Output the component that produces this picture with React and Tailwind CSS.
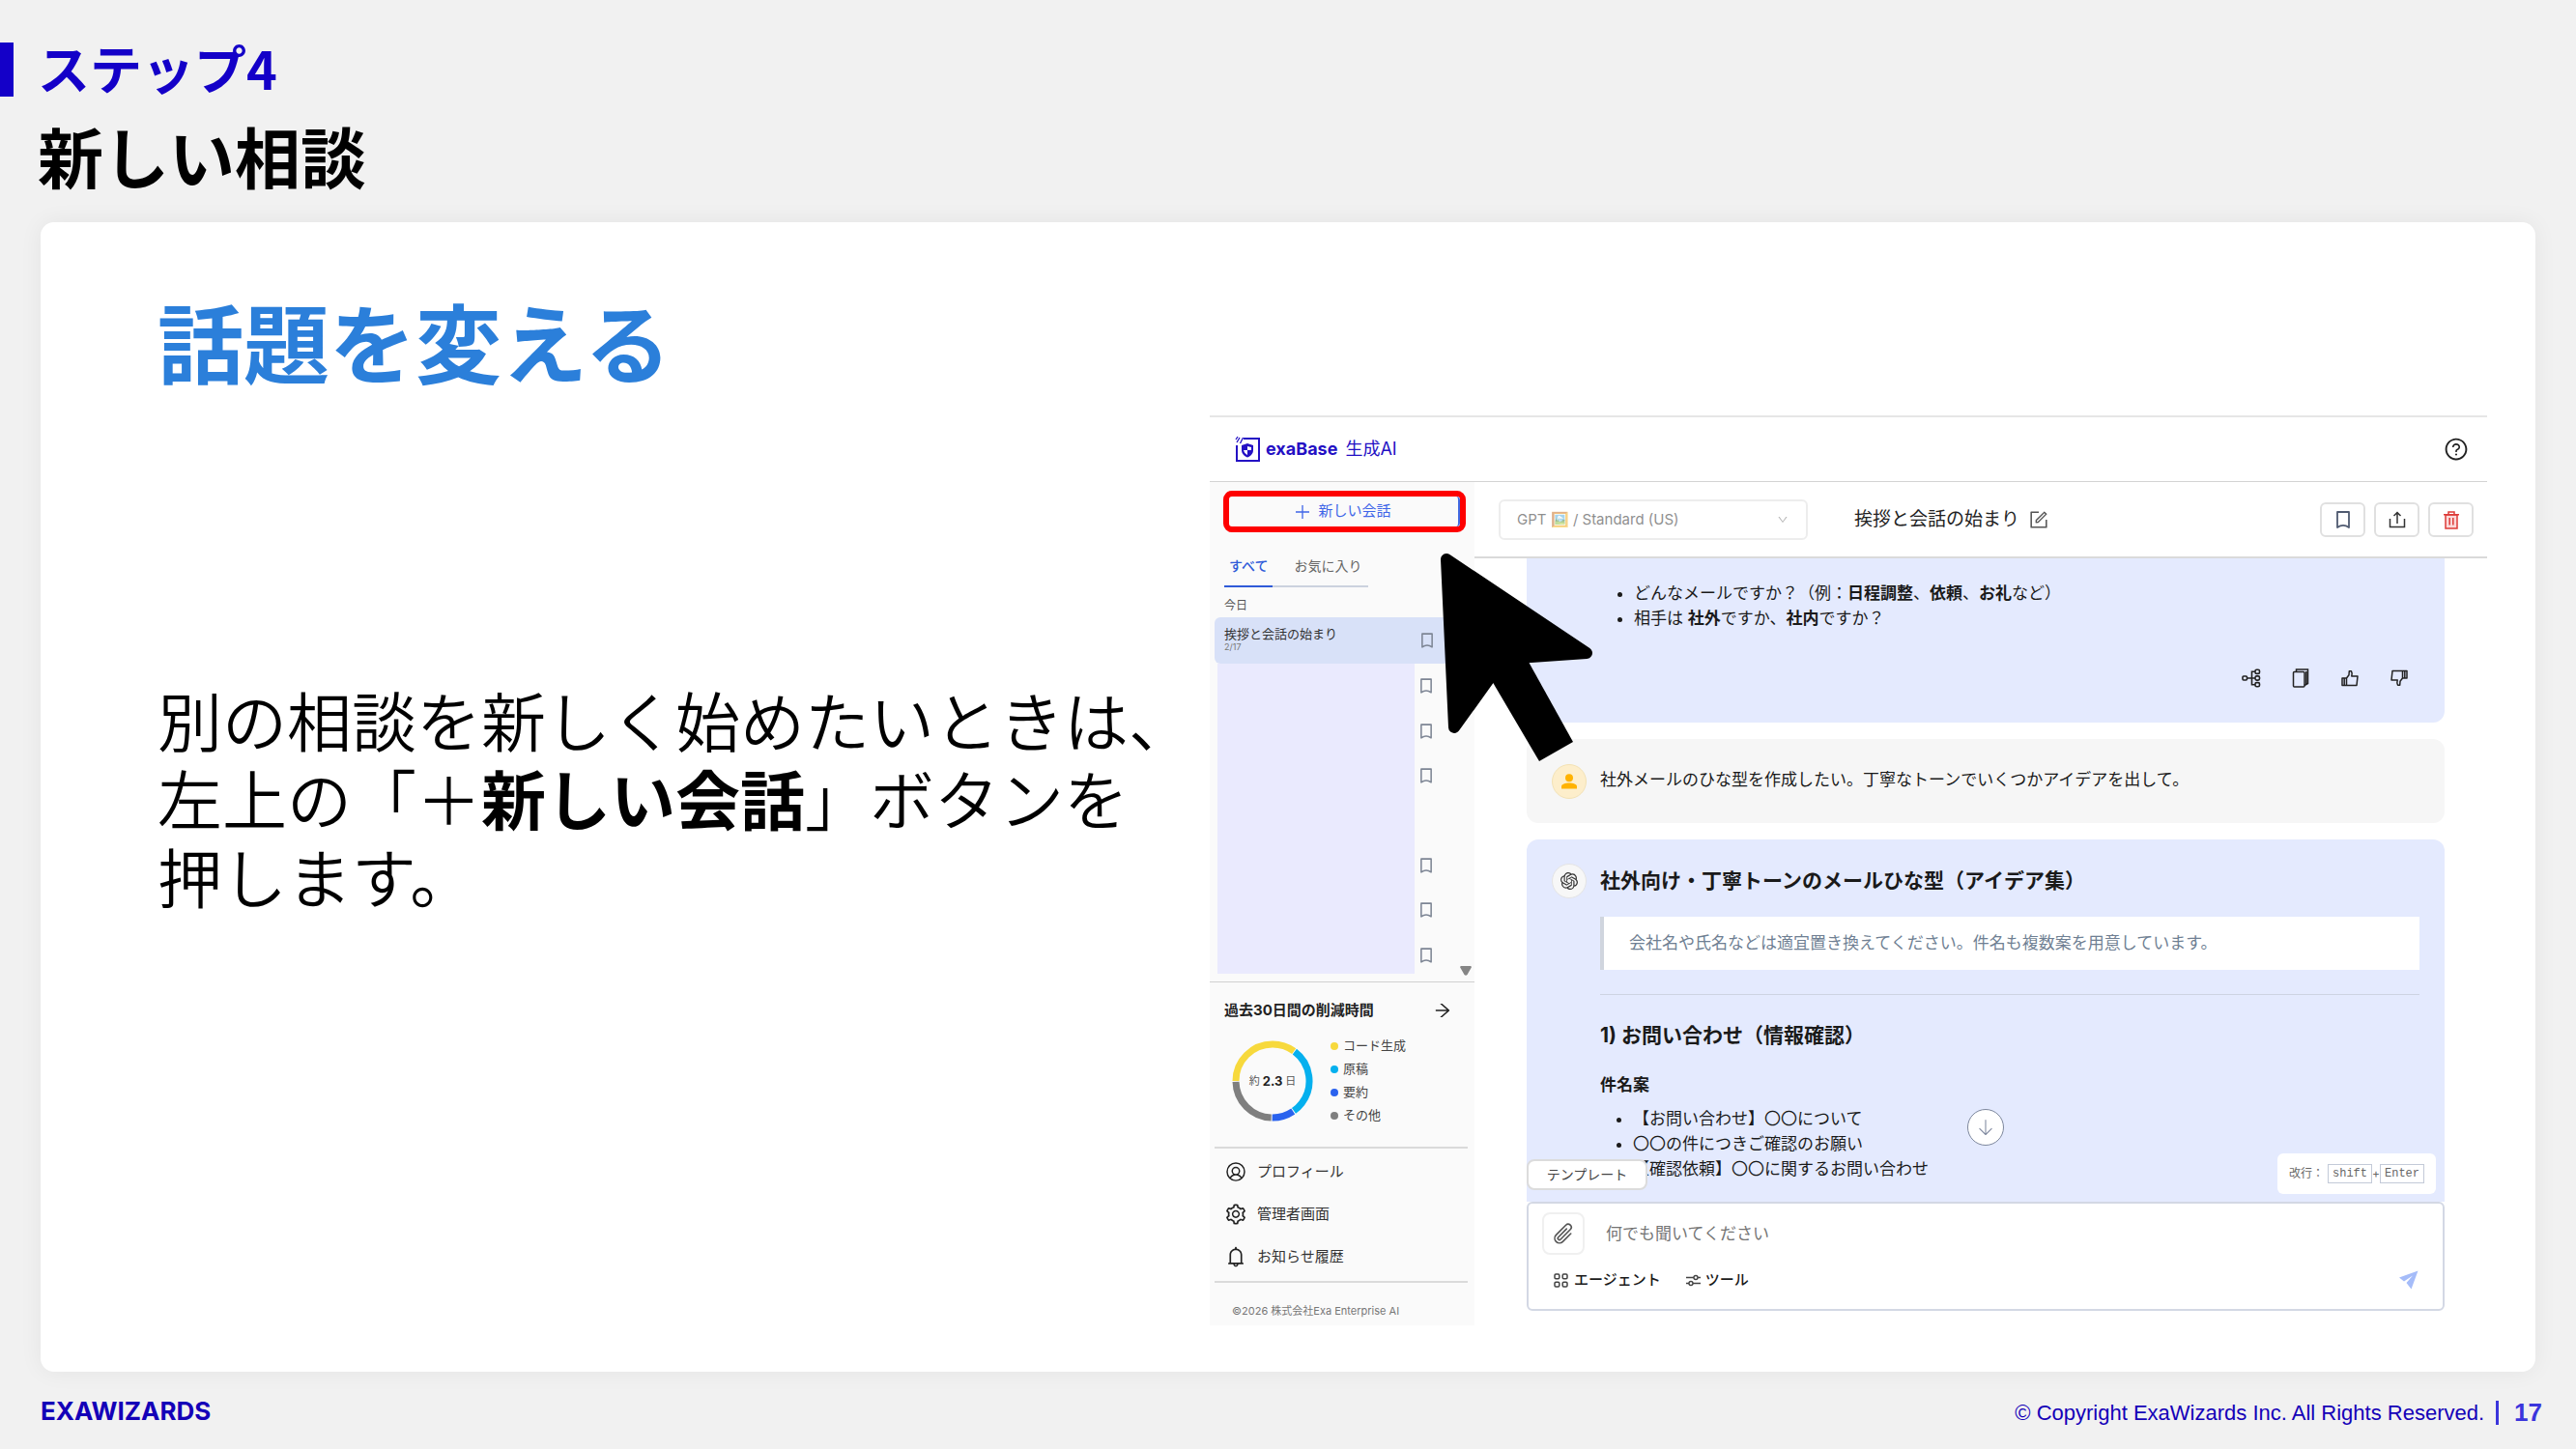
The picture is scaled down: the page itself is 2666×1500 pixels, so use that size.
import { useState } from "react";
import {
  AiOutlineArrowRight,
  AiOutlineBell,
  AiOutlineDown,
  AiOutlineForm,
  AiOutlineQuestionCircle,
  AiOutlineSetting,
} from "react-icons/ai";
import { PiArrowDownLight, PiPaperclip, PiUserCircle } from "react-icons/pi";
import { SiOpenai } from "react-icons/si";

const historyRows = [true, true, true, false, true, true, true];

const legend = [
  { label: "コード生成", dot: "bg-[#f7d93c]" },
  { label: "原稿", dot: "bg-[#05b0ee]" },
  { label: "要約", dot: "bg-[#2a62ee]" },
  { label: "その他", dot: "bg-[#7f7f7f]" },
];

// start / end in degrees, clockwise from the top
const segments = [
  { start: 270, end: 397, color: "#f7d93c" },
  { start: 37, end: 146, color: "#05b0ee" },
  { start: 146, end: 182, color: "#2a62ee" },
  { start: 182, end: 270, color: "#7f7f7f" },
];

const menu = [
  { label: "プロフィール", Icon: PiUserCircle },
  { label: "管理者画面", Icon: AiOutlineSetting },
  { label: "お知らせ履歴", Icon: AiOutlineBell },
];

function BookmarkIcon({ className }) {
  return (
    <svg viewBox="0 0 14 18" className={className} fill="none" stroke="currentColor" strokeWidth="1.800">
      <path d="M1 1h12v16c-3.600-2.600-8.400-2.600-12 0z" strokeLinejoin="round" />
    </svg>
  );
}

function ShareIcon() {
  return (
    <svg viewBox="0 0 18 18" className="size-[18px]" fill="none" stroke="currentColor" strokeWidth="1.500">
      <path d="M1.500 8v8.500h15V8M9 13V1.500M5.500 5L9 1.500 12.500 5" />
    </svg>
  );
}

function TrashIcon() {
  return (
    <svg viewBox="0 0 16 19" className="h-[19px] w-4" fill="none" stroke="currentColor" strokeWidth="1.500">
      <path d="M2 4h12v14H2z" fill="#fbd9d9" />
      <path d="M0 3.700h16M5 3.500V1h6v2.500M6.200 7v7.500M9.800 7v7.500" />
    </svg>
  );
}

function BranchIcon() {
  return (
    <svg viewBox="0 0 20 20" className="size-5" fill="none" stroke="currentColor" strokeWidth="1.600">
      <rect x="1" y="8" width="4.500" height="4" rx="1" />
      <rect x="14" y="1.200" width="4.500" height="4.200" rx="1.500" />
      <rect x="14" y="7.900" width="4.500" height="4.200" rx="1.500" />
      <rect x="14" y="14.600" width="4.500" height="4.200" rx="1.500" />
      <path d="M5.500 10H14M14 3.300h-3.500v13.400H14" />
    </svg>
  );
}

function CopyIcon() {
  return (
    <svg viewBox="0 0 20 20" className="size-5" fill="none" stroke="currentColor" strokeWidth="1.500">
      <rect x="2.500" y="3.500" width="11.500" height="15.500" rx="1" />
      <path d="M5.500 3.500V1h12v14.500l-3.500 2M15.800 3v13" />
    </svg>
  );
}

function ThumbIcon({ down }) {
  return (
    <svg
      viewBox="0 0 20 20"
      className={down ? "size-5 rotate-180" : "size-5"}
      fill="none"
      stroke="currentColor"
      strokeWidth="1.500"
      strokeLinejoin="round"
    >
      <path d="M2 10h4.500v7.500H2zM6.500 10L9 6.800 9.300 2.800h2.200c1 1.500.8 3.200.3 5.200H18l-1 9.500H6.500" />
      <path d="M4.200 10v7.500" />
    </svg>
  );
}

function ExaBaseLogo() {
  return (
    <svg viewBox="0 0 26 28" className="h-7 w-[26px]" fill="none" stroke="#2410c4" strokeWidth="2">
      <path d="M9 3h16v23H2V10" />
      <path d="M2 7l3-5M5.500 8l3-6M1 4l2-3" strokeWidth="1.300" />
      <path d="M13 8l6 2v5c0 3.500-2.500 6-6 7.500C9.500 21 7 18.500 7 15v-5z" fill="#2410c4" stroke="none" />
      <path d="M13 11v4h4v-3zM13 15v5c-2-1-3.500-2.700-4-5z" fill="#fff" stroke="none" />
    </svg>
  );
}

function DonutChart() {
  const r = 38;
  const length = 2 * Math.PI * r;
  return (
    <div className="relative flex size-[84px] items-center justify-center">
      <svg viewBox="0 0 84 84" className="absolute inset-0">
        {segments.map((s) => (
          <circle
            key={s.color}
            cx="42"
            cy="42"
            r={r}
            fill="none"
            stroke={s.color}
            strokeWidth="7"
            strokeDasharray={`${((s.end - s.start - 1.5) / 360) * length} ${length}`}
            transform={`rotate(${s.start - 90} 42 42)`}
          />
        ))}
      </svg>
      <div className="relative flex items-center gap-[3px] text-[11px] leading-4 text-[#555]">
        約<b className="text-[13px] text-[#222]">2.3</b>日
      </div>
    </div>
  );
}

function Sidebar() {
  const [tab, setTab] = useState("all");
  return (
    <aside className="flex w-[274px] shrink-0 flex-col bg-[#fafafa]">
      <div className="mt-[9px] mr-[9px] ml-[14px] h-[43px] rounded-[9px] border-6 border-[#fe0000] bg-[#fafafa]">
        <button className="flex size-full items-center justify-center gap-[9px] rounded-r-sm border-r-2 border-[#4169e1] text-[15px] text-[#3f66e8]">
          <svg viewBox="0 0 14 14" className="size-[14px]" stroke="currentColor" strokeWidth="1.300">
            <path d="M7 0v14M0 7h14" />
          </svg>
          新しい会話
        </button>
      </div>
      <div className="mt-[15px] ml-[15px] flex self-start border-b-2 border-[#ccd2de] text-sm">
        <button
          onClick={() => setTab("all")}
          className={`-mb-[2px] h-[42px] border-b-2 px-[5px] ${tab === "all" ? "border-[#2f5bd8] font-medium text-[#2f5bd8]" : "border-transparent text-[#666]"}`}
        >
          すべて
        </button>
        <button
          onClick={() => setTab("favorite")}
          className={`-mb-[2px] h-[42px] border-b-2 pr-[7px] pl-[22px] ${tab === "favorite" ? "border-[#2f5bd8] font-medium text-[#2f5bd8]" : "border-transparent text-[#666]"}`}
        >
          お気に入り
        </button>
      </div>
      <p className="mt-[9px] mb-[2px] ml-[15px] text-xs leading-5 text-[#555]">今日</p>
      <div className="mr-[24px] ml-[5px] flex h-12 items-center justify-between rounded-md bg-[#d8e1f8] pr-[19px] pl-[10px]">
        <div className="pb-1">
          <p className="text-[13px] leading-[18px] text-[#333]">挨拶と会話の始まり</p>
          <p className="text-[9px] leading-[10px] text-[#777]">2/17</p>
        </div>
        <BookmarkIcon className="h-4 w-3 text-[#7d8594]" />
      </div>
      <div className="flex h-[329px] items-start">
        <div className="ml-2 h-[321px] w-[204px] bg-[#eaeafe]" />
        <ul className="ml-[6px] flex h-[325px] flex-col">
          {historyRows.map((visible, idx) => (
            <li key={idx} className="flex flex-1 items-center">
              {visible && <BookmarkIcon className="h-4 w-3 text-[#7d8594]" />}
            </li>
          ))}
        </ul>
        <svg viewBox="0 0 12 10" className="mr-[3px] mb-[6px] ml-auto h-[10px] w-3 self-end" fill="#858585">
          <path d="M1 0h10q1.500.5.500 2L7.500 9q-1.500 1.500-3 0L.5 2Q-.5.500 1 0z" />
        </svg>
      </div>
      <section className="border-t border-[#d0d0d0] pt-[14px] pb-[20px]">
        <div className="mr-[23px] ml-[15px] flex h-[30px] items-center justify-between">
          <h3 className="text-[15px] font-bold text-[#222]">過去30日間の削減時間</h3>
          <AiOutlineArrowRight className="size-5 text-[#222]" />
        </div>
        <div className="mt-[10px] ml-[23px] flex items-center gap-[18px]">
          <DonutChart />
          <ul>
            {legend.map((item) => (
              <li key={item.label} className="flex h-6 items-center gap-[5px] text-[13px] text-[#444]">
                <span className={`size-2 rounded-full ${item.dot}`} />
                {item.label}
              </li>
            ))}
          </ul>
        </div>
      </section>
      <nav className="mr-[7px] ml-[5px] border-y-2 border-[#dadada] pt-[2px] pb-[3px]">
        {menu.map(({ label, Icon }) => (
          <a key={label} href="#" className="flex h-11 items-center gap-[10px] pl-[10px] text-[15px] text-[#333]">
            <Icon className="size-6 text-[#222]" />
            {label}
          </a>
        ))}
      </nav>
      <p className="mt-[21px] mb-[6px] ml-[23px] text-[11px] leading-4 text-[#777]">©2026 株式会社Exa Enterprise AI</p>
    </aside>
  );
}

function Toolbar() {
  return (
    <div className="flex h-[79px] items-center border-b-2 border-[#dadada] pt-px pr-[14px] pl-[25px]">
      <div className="relative">
        <select
          aria-label="モデル"
          className="h-[42px] w-[320px] appearance-none rounded-md border-2 border-[#e0e0e0] bg-white pl-[17px] text-[15px] text-[#333] opacity-55"
        >
          <option>GPT 🖼️ / Standard (US)</option>
        </select>
        <AiOutlineDown className="pointer-events-none absolute top-[15px] right-5 size-3 text-[#b5b5b5]" />
      </div>
      <h2 className="ml-12 text-[19px] text-[#222]">挨拶と会話の始まり</h2>
      <button aria-label="名前を編集" className="ml-[9px] text-[#555]">
        <AiOutlineForm className="size-[22px]" />
      </button>
      <div className="ml-auto flex gap-[9px]">
        <button aria-label="お気に入りに追加" className="flex h-[36px] w-[47px] items-center justify-center rounded-md border-2 border-[#e0e0e0] text-[#4f5a70]">
          <BookmarkIcon className="h-[18px] w-[14px]" />
        </button>
        <button aria-label="共有" className="flex h-[36px] w-[47px] items-center justify-center rounded-md border-2 border-[#e0e0e0] text-[#333]">
          <ShareIcon />
        </button>
        <button aria-label="削除" className="flex h-[36px] w-[47px] items-center justify-center rounded-md border-2 border-[#e0e0e0] text-[#dd3b38]">
          <TrashIcon />
        </button>
      </div>
    </div>
  );
}

function Conversation() {
  return (
    <div className="flex flex-1 flex-col pr-11 pl-[54px] text-[17px] leading-[26px] text-[#1a1a1a]">
      <article className="rounded-b-xl bg-[#e4eafe] pt-[23px] pr-[37px] pb-9">
        <ul className="list-disc pl-[111px]">
          <li>
            どんなメールですか？（例：<b>日程調整</b>、<b>依頼</b>、<b>お礼</b>など）
          </li>
          <li>
            相手は <b>社外</b>ですか、<b>社内</b>ですか？
          </li>
        </ul>
        <div className="mt-[39px] flex justify-end gap-[31px] text-[#222]">
          <button aria-label="分岐"><BranchIcon /></button>
          <button aria-label="コピー"><CopyIcon /></button>
          <button aria-label="良い"><ThumbIcon /></button>
          <button aria-label="悪い"><ThumbIcon down /></button>
        </div>
      </article>

      <article className="mt-[17px] flex h-[87px] items-center gap-[14px] rounded-xl bg-[#f6f6f6] pl-[26px]">
        <span className="flex size-9 items-center justify-center rounded-full border border-[#f3e2b5] bg-[#fdeecb]">
          <svg viewBox="0 0 16 16" className="size-4" fill="#ffb200">
            <circle cx="8" cy="4.200" r="4" />
            <path d="M0 15.500V13c0-2 4-3.500 8-3.500s8 1.500 8 3.500v2.500z" />
          </svg>
        </span>
        <p className="pb-[3px]">社外メールのひな型を作成したい。丁寧なトーンでいくつかアイデアを出して。</p>
      </article>

      <article className="relative mt-[17px] flex gap-[14px] rounded-t-xl bg-[#e4eafe] px-[26px] pt-[25px] pb-[21px]">
        <span className="flex size-9 shrink-0 items-center justify-center rounded-full border border-[#e4e4e4] bg-[#f7f7f7]">
          <SiOpenai className="size-[18px] text-[#333]" />
        </span>
        <div className="flex-1">
          <h2 className="text-[21px] leading-9 font-bold">社外向け・丁寧トーンのメールひな型（アイデア集）</h2>
          <blockquote className="mt-[19px] flex h-[55px] items-center border-l-4 border-[#d0d5de] bg-white pb-[2px] pl-[26px] text-[#6f7f93]">
            会社名や氏名などは適宜置き換えてください。件名も複数案を用意しています。
          </blockquote>
          <hr className="mt-[25px] border-[#cdd3e2]" />
          <h3 className="mt-[26px] text-[21px] leading-8 font-bold">1) お問い合わせ（情報確認）</h3>
          <h4 className="mt-[22px] font-bold">件名案</h4>
          <ul className="mt-[9px] list-disc pl-[34px]">
            <li>【お問い合わせ】〇〇について</li>
            <li>〇〇の件につきご確認のお願い</li>
            <li>【確認依頼】〇〇に関するお問い合わせ</li>
          </ul>
        </div>
        <button className="absolute bottom-3 left-0 h-8 w-[125px] rounded-lg border-2 border-[#dcdcdc] bg-white text-sm leading-5 text-[#444]">
          テンプレート
        </button>
        <button
          aria-label="一番下へ"
          className="absolute bottom-[58px] left-1/2 flex size-[38px] -translate-x-1/2 items-center justify-center rounded-full border border-[#7d879d] bg-white text-[#7d879d]"
        >
          <PiArrowDownLight className="size-[22px]" />
        </button>
        <p className="absolute right-[9px] bottom-2 flex h-[42px] items-center rounded-md bg-white px-3 text-xs text-[#666]">
          改行：
          <kbd className="ml-1 border border-[#c3cad8] px-1 font-['Liberation_Mono'] leading-[18px]">shift</kbd>+
          <kbd className="border border-[#c3cad8] px-1 font-['Liberation_Mono'] leading-[18px]">Enter</kbd>
        </p>
      </article>

      <form className="mb-[15px] rounded-md border-2 border-[#d3d8e4] bg-white pt-[9px] pb-[15px] pl-[14px]">
        <div className="flex items-center">
          <button
            type="button"
            aria-label="ファイルを添付"
            className="flex size-11 items-center justify-center rounded-lg border-2 border-[#f0f0f0] text-[#555]"
          >
            <PiPaperclip className="size-[26px]" />
          </button>
          <input
            aria-label="メッセージ"
            placeholder="何でも聞いてください"
            className="ml-[22px] min-w-0 flex-1 outline-none placeholder:text-[#757575]"
          />
        </div>
        <div className="mt-[11px] flex h-[30px] items-center pr-[25px] pl-3 text-[15px] font-medium">
          <button type="button" className="flex items-center gap-[6px]">
            <svg viewBox="0 0 15 15" className="size-[15px]" fill="none" stroke="#444" strokeWidth="1.500">
              <rect x="1" y="1" width="4.800" height="4.800" rx="1.200" />
              <rect x="9.200" y="1" width="4.800" height="4.800" rx="1.200" />
              <rect x="1" y="9.200" width="4.800" height="4.800" rx="1.200" />
              <rect x="9.200" y="9.200" width="4.800" height="4.800" rx="1.200" />
            </svg>
            エージェント
          </button>
          <button type="button" className="ml-[26px] flex items-center gap-[5px]">
            <svg viewBox="0 0 15 15" className="size-[15px]" fill="none" stroke="#444" strokeWidth="1.400">
              <path d="M0 4.500h8M12 4.500h3M0 10.500h3M7 10.500h8" />
              <circle cx="10" cy="4.500" r="2" />
              <circle cx="5" cy="10.500" r="2" />
            </svg>
            ツール
          </button>
          <button type="submit" aria-label="送信" className="ml-auto">
            <svg viewBox="0 0 20 20" className="size-5" fill="#a5bcf9">
              <path d="M19.500.5L0 7.500l5 4L14 5.500 7.500 13l5 6.500z" />
            </svg>
          </button>
        </div>
      </form>
    </div>
  );
}

function ChatApp() {
  return (
    <div className="relative mt-[200px] self-start border-t-2 border-[#e6e6e6] bg-white font-[Inter,'Noto_Sans_CJK_JP',sans-serif]">
      <header className="flex h-[67px] items-center border-b border-[#d3d3d3] pr-[19px] pl-[26px] text-[#2410c4]">
        <ExaBaseLogo />
        <span className="ml-[6px] text-lg font-bold">exaBase</span>
        <span className="ml-2 text-lg">生成AI</span>
        <button aria-label="ヘルプ" className="ml-auto text-[#222]">
          <AiOutlineQuestionCircle className="size-[26px]" />
        </button>
      </header>
      <div className="flex">
        <Sidebar />
        <main className="flex min-w-0 flex-1 flex-col">
          <Toolbar />
          <Conversation />
        </main>
      </div>
      {/* Flèche qui pointe vers le bouton */}
      <svg viewBox="0 0 160 216" className="absolute top-[140px] left-[238px] h-[216px] w-40">
        <path d="M7 7L152 104 80 109 60 119 51 131 15 181z" stroke="#000" strokeWidth="12" strokeLinejoin="round" />
        <path d="M50 126L88 106 138 196 103 216z" />
      </svg>
    </div>
  );
}

export default function App() {
  return (
    <div className="flex min-h-screen flex-col bg-[#f1f1f1] font-['Noto_Sans_CJK_JP',sans-serif] text-black">
      <header className="pt-11 pb-[35px]">
        <p className="flex h-14 items-center border-l-14 border-[#1400c8] pb-1 pl-[25px] text-[54px] leading-[52px] font-bold text-[#1400c8]">
          ステップ4
        </p>
        <h1 className="mt-[26px] ml-[39px] text-[68px] leading-[69px] font-bold">新しい相談</h1>
      </header>

      <section className="mx-[42px] grid flex-1 grid-cols-[minmax(0,1089fr)_minmax(0,1322fr)] rounded-[14px] bg-white pr-[50px] pl-[121px] shadow-[0_0_24px_rgba(0,0,0,0.06)]">
        <div>
          <h2 className="mt-[78px] text-[89px] leading-[88px] font-bold text-[#2b7fda]">話題を変える</h2>
          <p className="mt-[313px] font-['Liberation_Sans','Noto_Sans_CJK_JP',sans-serif] text-[67px] leading-[81px] font-[350]">
            別の相談を新しく始めたいときは、
            <br />
            左上の「＋<b className="font-bold">新しい会話</b>」ボタンを
            <br />
            押します。
          </p>
        </div>
        <ChatApp />
      </section>

      <footer className="flex h-20 items-center justify-between pr-[35px] pl-[42px] text-[#1400b8]">
        <span className="font-[Inter] text-[26px] font-bold">EXAWIZARDS</span>
        <p className="flex items-center pt-1 font-['Liberation_Sans'] text-[22px]">
          © Copyright ExaWizards Inc. All Rights Reserved.
          <span className="ml-3 h-[25px] w-[3px] bg-[#3b35dc]" />
          <b className="ml-4 text-[26px] text-[#3b35dc]">17</b>
        </p>
      </footer>
    </div>
  );
}
